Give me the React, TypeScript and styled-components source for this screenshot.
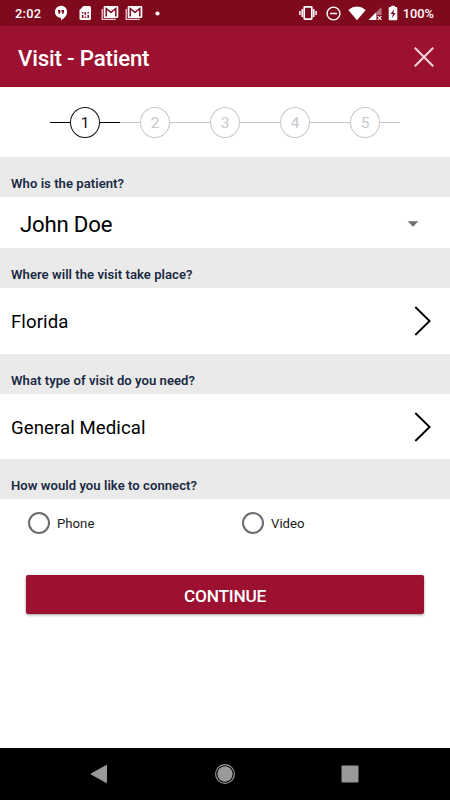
import React from 'react';
import styled, { createGlobalStyle } from 'styled-components';

const GlobalStyle = createGlobalStyle`
  * { box-sizing: border-box; }
  body { margin: 0; background: #fff; font-family: Roboto, "Noto Sans", sans-serif; color: #000; }
  button { font: inherit; border: 0; padding: 0; background: none; }
  svg { display: block; flex: none; }
`;

const Screen = styled.div`
  width: 450px;
  height: 800px;
  display: flex;
  flex-direction: column;
  background: #fff;
  overflow: hidden;
`;

const StatusBar = styled.div`
  height: 26px;
  flex: none;
  display: flex;
  align-items: center;
  justify-content: space-between;
  padding: 0 16px 0 15px;
  background: #7f091d;
  color: #fff;
`;

const StatusGroup = styled.div`
  display: flex;
  align-items: center;
`;

const StatusText = styled.span<{ $spacing: number }>`
  font-size: 12.8px;
  line-height: 26px;
  letter-spacing: ${p => p.$spacing}px;
  font-weight: 500;
  padding-top: 1px;
`;

const StatusIcon = styled.svg<{ $gap: number }>`
  margin-left: ${p => p.$gap}px;
`;

const Header = styled.header`
  height: 61px;
  flex: none;
  display: flex;
  align-items: center;
  justify-content: space-between;
  padding: 1px 16px 0 18px;
  background: #9d1130;
  border-bottom: 1px solid #a30a12;
  color: #fff;
`;

const Title = styled.h1`
  margin: 0;
  padding-top: 2px;
  font-size: 22.3px;
  line-height: 30px;
  font-weight: 500;
  letter-spacing: -0.2px;
`;

const Stepper = styled.div`
  height: 70px;
  flex: none;
  display: flex;
  align-items: center;
  justify-content: center;
`;

const Step = styled.div<{ $active?: boolean }>`
  width: 70px;
  display: flex;
  align-items: center;
  color: ${p => (p.$active ? '#11111c' : '#c7caca')};
`;

const StepLine = styled.span<{ $active?: boolean }>`
  flex: 1;
  height: 1px;
  background: ${p => (p.$active ? '#000' : '#c3c8c8')};
`;

const StepCircle = styled.span`
  width: 30px;
  height: 31px;
  border: 1.4px solid currentColor;
  border-radius: 50%;
  display: flex;
  align-items: center;
  justify-content: center;
  font-size: 15.5px;
  line-height: 29px;
  padding-top: 2px;
`;

const Question = styled.h2`
  margin: 0;
  height: 40px;
  flex: none;
  padding: 14px 11px 0;
  background: #eaeaea;
  color: #1b2a44;
  font-size: 13.1px;
  letter-spacing: 0.04px;
  line-height: 25px;
  font-weight: 600;
`;

const PatientRow = styled.div`
  height: 51px;
  flex: none;
  display: flex;
  align-items: center;
  justify-content: space-between;
  padding: 2px 31px 0 20px;
  font-size: 22.2px;
  letter-spacing: -0.2px;
`;

const ChoiceRow = styled.div<{ $height: number }>`
  height: ${p => p.$height}px;
  flex: none;
  display: flex;
  align-items: center;
  justify-content: space-between;
  padding: 0 18px 0 11px;
  font-size: 18.6px;
  letter-spacing: 0.08px;
`;

const ChoiceLabel = styled.span`
  padding-top: 2px;
`;

const Options = styled.div`
  height: 48px;
  flex: none;
  display: grid;
  grid-template-columns: 214px 1fr;
  padding-left: 28px;
`;

const Option = styled.label`
  display: flex;
  align-items: center;
  gap: 7px;
  font-size: 13.2px;
  color: #1c1c1c;
`;

const Radio = styled.span`
  width: 22px;
  height: 22px;
  border: 2px solid #6b6b6b;
  border-radius: 50%;
`;

const ContinueButton = styled.button`
  height: 39px;
  flex: none;
  margin: 27.5px 26px 0;
  background: #9d1130;
  color: #fff;
  border-radius: 2px;
  box-shadow: 0 1px 3px rgba(0, 0, 0, 0.4);
  font-size: 17.3px;
  letter-spacing: -0.25px;
  font-weight: 500;
  line-height: 38px;
  padding-top: 2px;
`;

const NavBar = styled.nav`
  height: 52px;
  flex: none;
  margin-top: auto;
  display: flex;
  align-items: center;
  justify-content: space-between;
  padding: 0 91px 0 90px;
  background: #000;
`;

const Mail = ({ gap }: { gap: number }) => (
  <StatusIcon $gap={gap} width="18" height="16" viewBox="0 0 18 16" fill="none">
    <path d="M1.2 4V14.3H14.8" stroke="#e8cdd2" strokeWidth="1.3" />
    <path d="M4 1h12a1.3 1.3 0 0 1 1.3 1.3v9.4A1.3 1.3 0 0 1 16 13H4a1.3 1.3 0 0 1-1.3-1.3V2.3A1.3 1.3 0 0 1 4 1z" fill="#fff" />
    <path d="M5.2 11.6V3.6l4.8 3.8 4.8-3.8v8" stroke="#7f091d" strokeWidth="1.5" />
  </StatusIcon>
);

const Chevron = () => (
  <svg width="18" height="30" viewBox="0 0 18 30" fill="none">
    <path d="M1.3 1l14.3 14L1.3 29" stroke="#000" strokeWidth="1.9" />
  </svg>
);

export default function App() {
  return (
    <>
      <GlobalStyle />
      <Screen>
        <StatusBar>
          <StatusGroup>
            <StatusText $spacing={0.25}>2:02</StatusText>
            <StatusIcon $gap={12.5} width="14" height="16" viewBox="0 0 14 16">
              <path d="M7 .7a6.1 6.1 0 0 0-6.1 6.1c0 3.4 2.7 6 6.1 6v2.5c3.2-1.6 6.1-4.7 6.1-8.5C13.1 3.4 10.4.7 7 .7z" fill="#fff" />
              <path d="M4 5h2.4v2.6L5.3 9H4.3l.7-1.5H4zM7.600 5H10v2.600L8.900 9h-1l.7-1.500h-1z" fill="#7f091d" />
            </StatusIcon>
            <StatusIcon $gap={10} width="14" height="16" viewBox="0 0 14 16">
              <path d="M5.5 1H11.5Q13 1 13 2.5V13.5Q13 15 11.5 15H3Q1.5 15 1.5 13.5V5z" fill="#fff" />
              <path d="M3.9 7h1.5v1.5H3.9zM9.4 7h1.5v1.5H9.4zM6.6 7h1.5v3H6.6zM3.9 10h1.5v3H3.9zM9.4 10h1.5v3H9.4zM6.6 11.5h1.5V13H6.6z" fill="#7f091d" />
            </StatusIcon>
            <Mail gap={9} />
            <Mail gap={6} />
            <StatusIcon $gap={12} width="5" height="5" viewBox="0 0 5 5">
              <circle cx="2.5" cy="2.5" r="2.1" fill="#fff" />
            </StatusIcon>
          </StatusGroup>
          <StatusGroup>
            <StatusIcon $gap={0} width="18" height="16" viewBox="0 0 18 16" fill="none" stroke="#fff">
              <rect x="5.2" y="1.9" width="7.6" height="12.2" rx=".6" strokeWidth="1.7" />
              <path d="M3.2 4v8M14.8 4v8" strokeWidth="1.5" />
              <path d="M.9 6v4M17.1 6v4" strokeWidth="1.5" />
            </StatusIcon>
            <StatusIcon $gap={8.5} width="15" height="15" viewBox="0 0 15 15" fill="none" stroke="#fff">
              <circle cx="7.5" cy="7.5" r="6.4" strokeWidth="1.4" />
              <path d="M4 7.5h7" strokeWidth="1.5" />
            </StatusIcon>
            <StatusIcon $gap={7} width="18" height="15" viewBox="0 0 18 15">
              <path d="M.3 4Q9-2.8 17.7 4L9 14.3z" fill="#fff" />
            </StatusIcon>
            <StatusIcon $gap={2} width="15" height="15" viewBox="0 0 15 15">
              <path d="M13.5 1v8H9v5H.5z" fill="#b9707d" />
              <path d="M8 6.5V14H.5z" fill="#fff" />
              <path d="M9.8 10.2l3.6 3.6M13.4 10.2l-3.6 3.6" stroke="#fff" strokeWidth="1.2" />
            </StatusIcon>
            <StatusIcon $gap={5} width="10" height="16" viewBox="0 0 10 16">
              <path d="M3.2.7h3.6V2H8.2Q9.3 2 9.3 3V14Q9.3 15.3 8.2 15.3H1.8Q.7 15.3.7 14V3Q.7 2 1.8 2H3.2z" fill="#fff" />
              <path d="M6 4.2L2.6 9H4.8L4 13.2 7.5 8H5.4z" fill="#7f091d" />
            </StatusIcon>
            <StatusIcon $gap={4} width="1" height="1" />
            <StatusText $spacing={0}>100%</StatusText>
          </StatusGroup>
        </StatusBar>

        <Header>
          <Title>Visit - Patient</Title>
          <svg width="20" height="20" viewBox="0 0 20 20" fill="none">
            <path d="M.8.8l18.4 18.4M19.2.8L.8 19.2" stroke="#f3d3da" strokeWidth="2.1" />
          </svg>
        </Header>

        <Stepper>
          {[1, 2, 3, 4, 5].map(n => (
            <Step key={n} $active={n === 1}>
              <StepLine $active={n === 1} />
              <StepCircle>{n}</StepCircle>
              <StepLine $active={n === 1} />
            </Step>
          ))}
        </Stepper>

        <Question>Who is the patient?</Question>
        <PatientRow>
          <span>John Doe</span>
          <svg width="12" height="6" viewBox="0 0 12 6">
            <path d="M.6.3h10.8L6 5.7z" fill="#707070" />
          </svg>
        </PatientRow>

        <Question>Where will the visit take place?</Question>
        <ChoiceRow $height={66}>
          <ChoiceLabel>Florida</ChoiceLabel>
          <Chevron />
        </ChoiceRow>

        <Question>What type of visit do you need?</Question>
        <ChoiceRow $height={65.4}>
          <ChoiceLabel>General Medical</ChoiceLabel>
          <Chevron />
        </ChoiceRow>

        <Question>How would you like to connect?</Question>
        <Options>
          <Option><Radio />Phone</Option>
          <Option><Radio />Video</Option>
        </Options>

        <ContinueButton>CONTINUE</ContinueButton>

        <NavBar>
          <svg width="18" height="20" viewBox="0 0 18 20">
            <path d="M1 10L16.5 1.3V18.7z" fill="#999" stroke="#999" strokeLinejoin="round" />
          </svg>
          <svg width="20" height="20" viewBox="0 0 20 20">
            <circle cx="10" cy="10" r="9.4" fill="none" stroke="#999" strokeWidth="1.1" />
            <circle cx="10" cy="10" r="7.7" fill="#999" />
          </svg>
          <svg width="18" height="18" viewBox="0 0 18 18">
            <rect x=".5" y=".5" width="17" height="17" rx="1" fill="#999" />
          </svg>
        </NavBar>
      </Screen>
    </>
  );
}
